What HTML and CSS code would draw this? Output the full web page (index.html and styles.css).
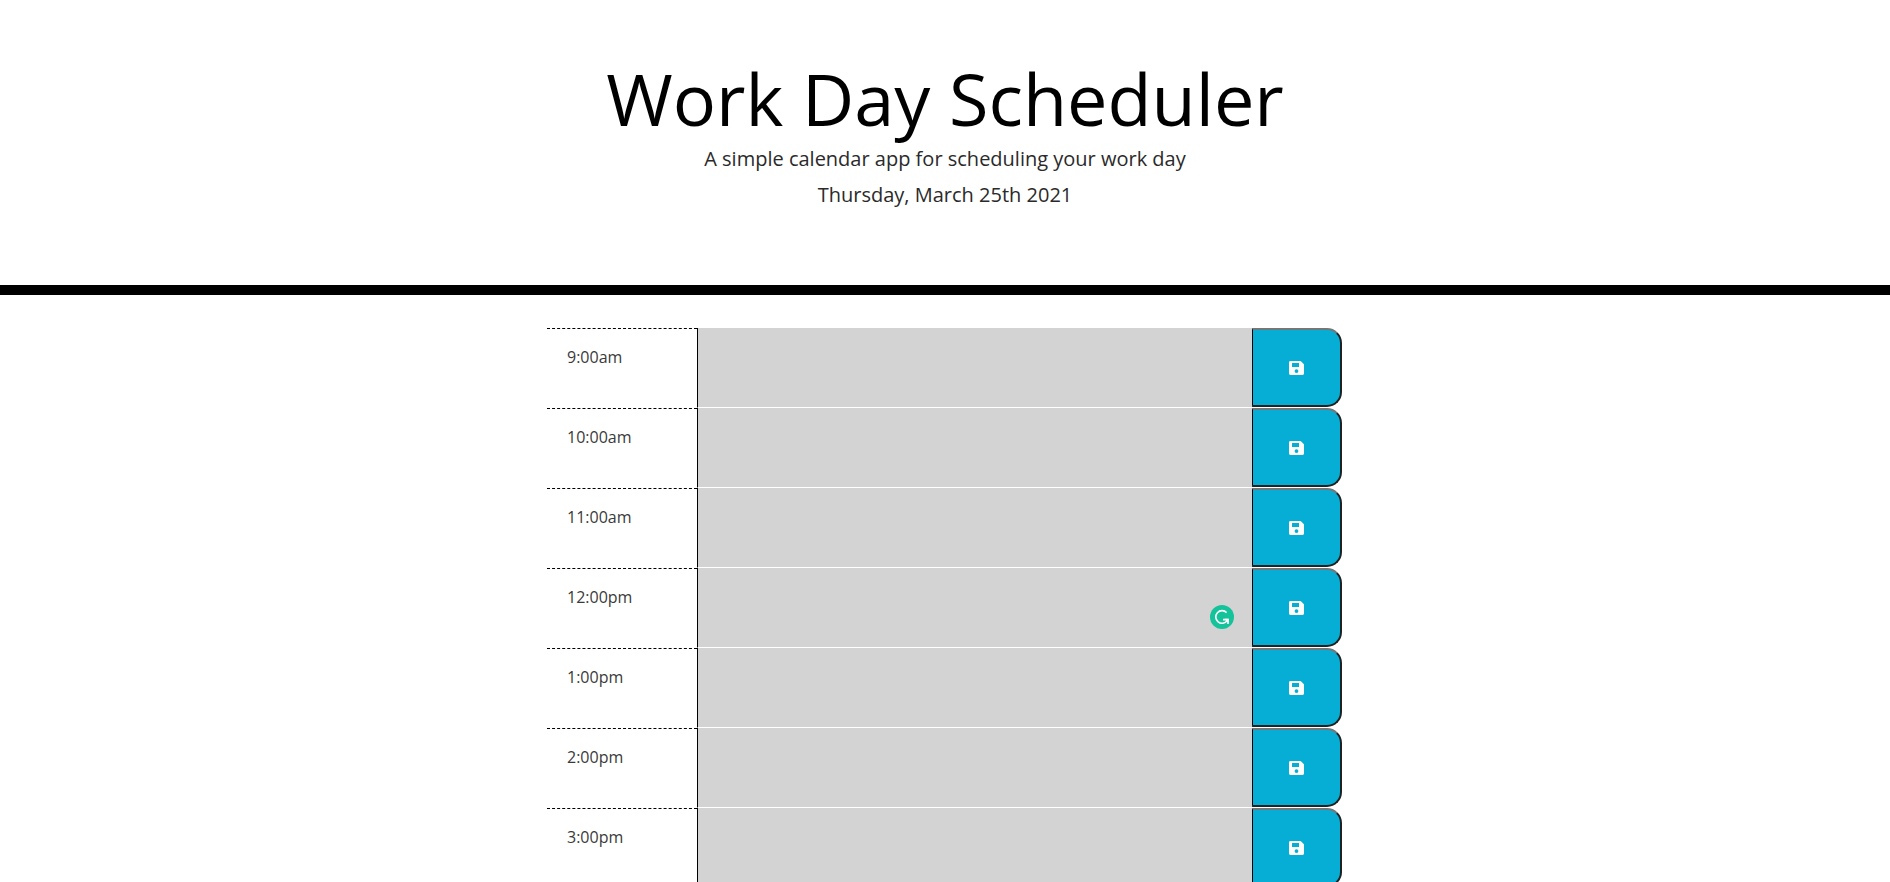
FILE: index.html
```html
<!DOCTYPE html>
<html lang="en">
<head>
<meta charset="utf-8">
<meta name="viewport" content="width=device-width, initial-scale=1">
<title>Work Day Scheduler</title>
<link rel="stylesheet" href="styles.css">
</head>
<body>
<svg class="sprite" aria-hidden="true">
  <symbol id="save" viewBox="0 0 15 14"><path fill-rule="evenodd" d="M1.5 0H11.6L15 3.2V12.6Q15 14 13.6 14H1.4Q0 14 0 12.6V1.4Q0 0 1.5 0ZM3 2V6H10V2ZM7.5 8.2a1.9 1.9 0 1 0 0 3.8a1.9 1.9 0 1 0 0-3.8Z"/></symbol>
</svg>
<header class="jumbotron">
  <h1 class="title">Work Day Scheduler</h1>
  <p class="lead">A simple calendar app for scheduling your work day</p>
  <p class="lead">Thursday, March 25th 2021</p>
</header>
<main class="container">
  <div class="row">
    <label class="hour" for="h9">9:00am</label>
    <div class="entry"><textarea class="past" id="h9"></textarea></div>
    <button class="save-btn" type="button" aria-label="Save 9:00am"><svg class="icon"><use href="#save"/></svg></button>
  </div>
  <div class="row">
    <label class="hour" for="h10">10:00am</label>
    <div class="entry"><textarea class="past" id="h10"></textarea></div>
    <button class="save-btn" type="button" aria-label="Save 10:00am"><svg class="icon"><use href="#save"/></svg></button>
  </div>
  <div class="row">
    <label class="hour" for="h11">11:00am</label>
    <div class="entry"><textarea class="past" id="h11"></textarea></div>
    <button class="save-btn" type="button" aria-label="Save 11:00am"><svg class="icon"><use href="#save"/></svg></button>
  </div>
  <div class="row">
    <label class="hour" for="h12">12:00pm</label>
    <div class="entry"><textarea class="past" id="h12"></textarea>
      <svg class="badge" viewBox="0 0 24 24" aria-hidden="true"><circle cx="12" cy="12" r="12" fill="#15c39a"/><path d="M16.6 7.6A6.3 6.3 0 1 0 17.2 15.6M13 14.6H18V19" fill="none" stroke="#fff" stroke-width="1.6"/><path d="M14.5 13.8h4.3V18.3z" fill="#fff"/></svg>
    </div>
    <button class="save-btn" type="button" aria-label="Save 12:00pm"><svg class="icon"><use href="#save"/></svg></button>
  </div>
  <div class="row">
    <label class="hour" for="h13">1:00pm</label>
    <div class="entry"><textarea class="past" id="h13"></textarea></div>
    <button class="save-btn" type="button" aria-label="Save 1:00pm"><svg class="icon"><use href="#save"/></svg></button>
  </div>
  <div class="row">
    <label class="hour" for="h14">2:00pm</label>
    <div class="entry"><textarea class="past" id="h14"></textarea></div>
    <button class="save-btn" type="button" aria-label="Save 2:00pm"><svg class="icon"><use href="#save"/></svg></button>
  </div>
  <div class="row">
    <label class="hour" for="h15">3:00pm</label>
    <div class="entry"><textarea class="past" id="h15"></textarea></div>
    <button class="save-btn" type="button" aria-label="Save 3:00pm"><svg class="icon"><use href="#save"/></svg></button>
  </div>
</main>
</body>
</html>
```
FILE: styles.css
```css
* {
  box-sizing: border-box;
}

body {
  margin: 0;
  height: 100vh;
  overflow: hidden;
  background: #fff;
  color: #000;
  font: 400 16px/24px "Open Sans", sans-serif;
}

.sprite {
  display: none;
}

.jumbotron {
  padding: 56px 16px 72px;
  border-bottom: 10px solid #000;
  text-align: center;
}

.title {
  margin: 0 0 1px;
  font-size: 72px;
  font-weight: 400;
  line-height: 84px;
}

.lead {
  margin: 0;
  color: #2a2a2a;
  font-size: 20px;
  line-height: 36px;
}

.container {
  max-width: 796px;
  margin: 33px auto 0;
  padding-right: 1px;
}

.row {
  display: grid;
  grid-template-columns: 150px 1fr 90px;
  min-height: 80px;
}

.hour {
  padding: 16px 20px;
  border-top: 1px dashed #000;
  color: #3a3a3a;
}

.entry {
  position: relative;
  display: flex;
}

.past {
  flex: 1;
  min-width: 0;
  height: 80px;
  padding: 8px;
  border: 0;
  border-left: 1px solid #000;
  border-bottom: 1px solid #fff;
  border-radius: 0;
  background: #d3d3d3;
  font: inherit;
  resize: none;
}

.badge {
  position: absolute;
  right: 18px;
  bottom: 19px;
  width: 24px;
  height: 24px;
}

.save-btn {
  display: flex;
  align-items: center;
  justify-content: center;
  margin: 0 0 1px;
  padding: 0;
  border-style: solid;
  border-width: 2px 2px 2px 1px;
  border-color: #767676 #212121 #212121 #000;
  border-radius: 0 15px 15px 0;
  background: #06aed5;
  color: #fff;
}

.icon {
  width: 15px;
  height: 14px;
  fill: currentColor;
}
```
